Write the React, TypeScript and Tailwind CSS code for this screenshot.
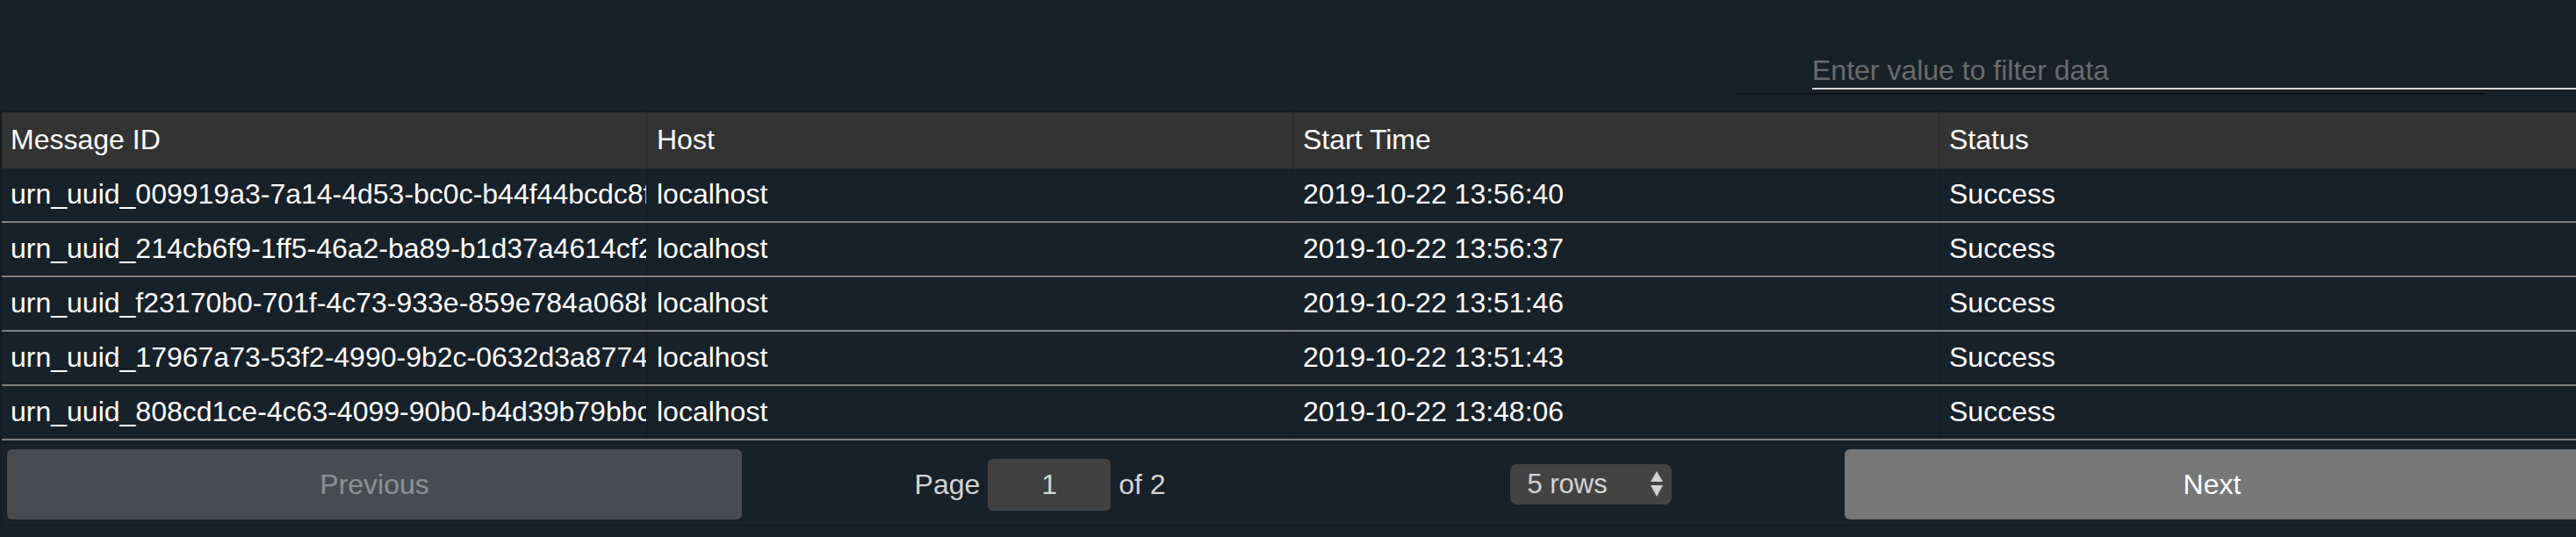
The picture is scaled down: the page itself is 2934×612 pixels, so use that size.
import React from "react";

const rows = [
  ["urn_uuid_009919a3-7a14-4d53-bc0c-b44f44bcdc8f", "localhost", "2019-10-22 13:56:40", "Success"],
  ["urn_uuid_214cb6f9-1ff5-46a2-ba89-b1d37a4614cf2", "localhost", "2019-10-22 13:56:37", "Success"],
  ["urn_uuid_f23170b0-701f-4c73-933e-859e784a068b", "localhost", "2019-10-22 13:51:46", "Success"],
  ["urn_uuid_17967a73-53f2-4990-9b2c-0632d3a87741", "localhost", "2019-10-22 13:51:43", "Success"],
  ["urn_uuid_808cd1ce-4c63-4099-90b0-b4d39b79bbc0", "localhost", "2019-10-22 13:48:06", "Success"],
];

const headers = ["Message ID", "Host", "Start Time", "Status"];

export default function App() {
  return (
    <div className="w-full h-[612px] bg-[#17212a] overflow-hidden font-['Liberation_Sans',Arial,sans-serif] text-[32px]">
      {/* filter bar */}
      <div className="h-[126px] flex justify-end pr-[104px]">
        <div className="w-[854px] shrink-0 h-[108px] border-b-2 border-[#0e161b] pl-[88px] flex items-end">
          <input
            className="w-[880px] shrink-0 h-[46px] mb-[4px] pt-[4px] pb-0 px-0 bg-transparent border-b-2 border-[#d9d9d9] text-[32px] text-white placeholder:text-[#6b6b6b] outline-none"
            placeholder="Enter value to filter data"
          />
        </div>
      </div>

      {/* table */}
      <div className="w-[2946px] border-2 border-[#141d23]">
        <div className="flex h-[64px] bg-[#333333]">
          {headers.map((h, i) => (
            <div
              key={h}
              className={`flex-1 min-w-0 px-[10px] pb-[3px] flex items-center text-white whitespace-nowrap overflow-hidden ${
                i < 3 ? "border-r-2 border-[#2c2c2c]" : ""
              }`}
            >
              {h}
            </div>
          ))}
        </div>
        {rows.map((r, ri) => (
          <div key={ri} className="flex h-[62px] border-b-2 border-[#7f7f7f]">
            {r.map((c, ci) => (
              <div
                key={ci}
                className={`flex-1 min-w-0 px-[10px] pb-[3px] flex items-center text-white whitespace-nowrap overflow-hidden ${
                  ci < 3 ? "border-r-2 border-[#151e25]" : ""
                }`}
              >
                {c}
              </div>
            ))}
          </div>
        ))}

        {/* pagination */}
        <div className="flex p-[6px] border-t-4 border-[#151e25]">
          <div className="flex-1">
            <button
              disabled
              className="w-full h-[80px] rounded-[6px] bg-[#777777] text-white opacity-50 text-[32px]"
            >
              Previous
            </button>
          </div>
          <div className="flex-[1.5] flex items-center justify-around">
            <div className="mx-[20px] flex items-center gap-[9px] whitespace-nowrap text-[#d4d4d4]">
              <span>Page</span>
              <div className="w-[140px] h-[59px] bg-[#404040] rounded-[6px] flex items-center justify-center text-[#d4d4d4]">
                1
              </div>
              <span>of 2</span>
            </div>
            <div className="mx-[20px] w-[184px] h-[46px] bg-[#434343] rounded-[8px] pl-[19px] pr-[10px] flex items-center justify-between text-[#d4d4d4] text-[31px]">
              <span>5 rows</span>
              <svg width="14" height="30" viewBox="0 0 14 30" className="shrink-0">
                <polygon points="7,0 14,12 0,12" fill="#d0d0d0" />
                <polygon points="0,16 14,16 7,29" fill="#d0d0d0" />
              </svg>
            </div>
          </div>
          <div className="flex-1">
            <button className="w-full h-[80px] rounded-[6px] bg-[#777777] text-white text-[32px]">
              Next
            </button>
          </div>
        </div>
      </div>
    </div>
  );
}
